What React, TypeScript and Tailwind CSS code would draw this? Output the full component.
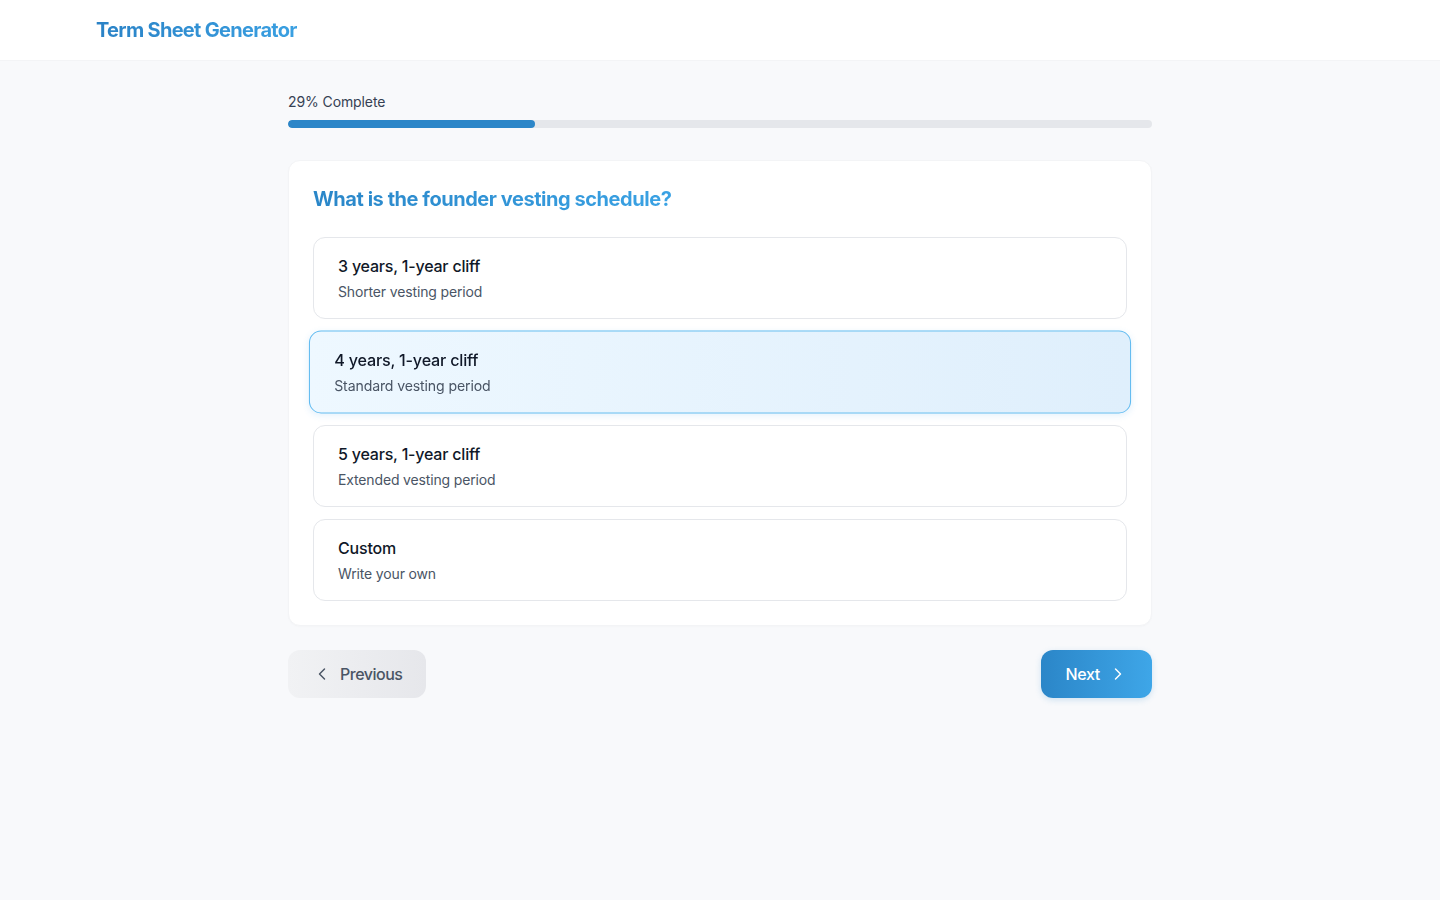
import { ChevronLeft, ChevronRight } from 'lucide-react';

const options = [
  { title: '3 years, 1-year cliff', desc: 'Shorter vesting period' },
  { title: '4 years, 1-year cliff', desc: 'Standard vesting period' },
  { title: '5 years, 1-year cliff', desc: 'Extended vesting period' },
  { title: 'Custom', desc: 'Write your own' },
];

export default function App() {
  const selected = 1;
  const progress = 29;

  return (
    <div className="min-h-screen bg-[#f8f9fb] font-['Inter',sans-serif] antialiased">
      <header className="h-[61px] bg-white border-b border-gray-100">
        <div className="max-w-7xl mx-auto px-4 h-full flex items-center">
          <h1 className="text-[20px] font-bold tracking-[-0.7px] bg-gradient-to-r from-[#2a82c6] to-[#3aa0e2] bg-clip-text text-transparent">
            Term Sheet Generator
          </h1>
        </div>
      </header>

      <main className="max-w-[864px] mx-auto pt-[31px]">
        <div className="mb-[32px]">
          <div className="text-sm text-gray-700 mb-2 tracking-[-0.1px]">{progress}% Complete</div>
          <div className="h-2 bg-gray-200 rounded-full overflow-hidden">
            <div className="h-full bg-[#2c86c8] rounded-full" style={{ width: '28.6%' }} />
          </div>
        </div>

        <div className="bg-white rounded-xl border border-gray-100 p-6 shadow-[0_1px_2px_rgba(0,0,0,0.02)]">
          <h2 className="text-[20px] font-bold leading-7 mb-6 tracking-[-0.45px] bg-gradient-to-r from-[#2a86c8] to-[#3aa2e4] bg-clip-text text-transparent w-fit">
            What is the founder vesting schedule?
          </h2>
          <div className="flex flex-col gap-3">
            {options.map((o, i) => (
              <div
                key={o.title}
                className={
                  i === selected
                    ? 'px-6 py-4 rounded-xl border border-[#5db9f0] bg-gradient-to-r from-[#eef8ff] to-[#dfeffc] scale-[1.01] shadow-[0_2px_6px_rgba(56,160,230,0.12)]'
                    : 'px-6 py-4 rounded-xl border border-gray-200 bg-white'
                }
              >
                <div className="text-base font-medium text-gray-900 leading-6 tracking-[-0.2px]">{o.title}</div>
                <div className="text-sm text-gray-600 mt-1 leading-5 tracking-[-0.15px]">{o.desc}</div>
              </div>
            ))}
          </div>
        </div>

        <div className="flex justify-between mt-6">
          <button className="h-12 px-6 rounded-xl bg-gradient-to-r from-[#f1f2f4] to-[#e6e7eb] text-gray-600 text-base font-medium flex items-center gap-2 tracking-[-0.5px]">
            <ChevronLeft size={20} strokeWidth={1.75} />
            Previous
          </button>
          <button className="h-12 px-6 rounded-xl bg-gradient-to-r from-[#2b86c8] to-[#3ea6e8] text-white text-base font-medium flex items-center gap-2 tracking-[-0.3px] shadow-[0_2px_6px_rgba(43,134,200,0.2)]">
            Next
            <ChevronRight size={20} strokeWidth={1.75} />
          </button>
        </div>
      </main>
    </div>
  );
}
